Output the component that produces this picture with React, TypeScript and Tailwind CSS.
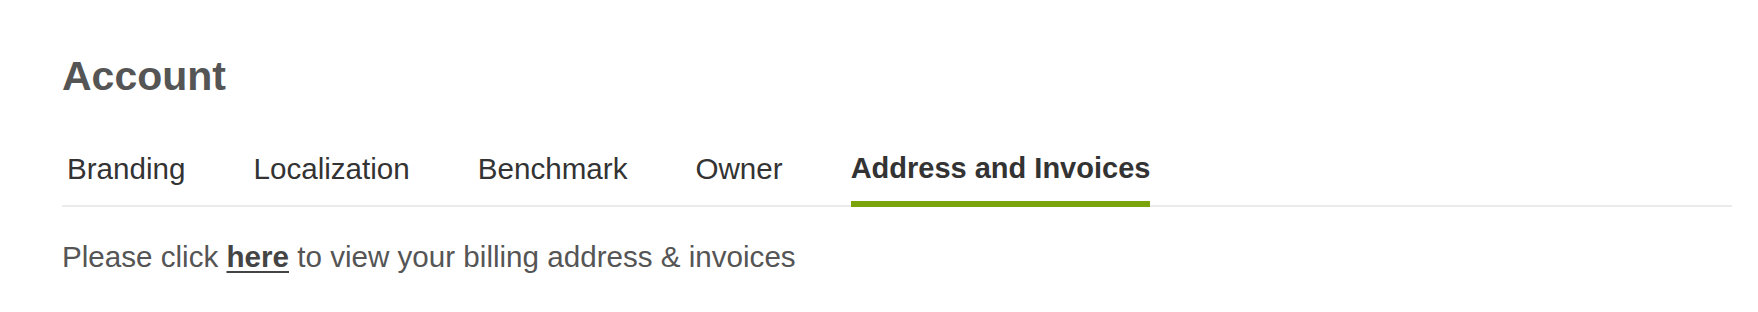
import { useState } from "react";

const tabs = ["Branding", "Localization", "Benchmark", "Owner", "Address and Invoices"];

export default function App() {
  const [active, setActive] = useState("Address and Invoices");

  return (
    <div className="min-h-[312px] bg-white pl-[62px] pr-[26px] pt-[52px] font-['Liberation_Sans',Arial,sans-serif]">
      <h1 className="text-[41px] leading-[48px] font-bold text-[#555555]">Account</h1>

      {/* tabs */}
      <div className="mt-[51px] flex items-end gap-[68px] border-b-2 border-[#ebebeb] pl-[5px]">
        {tabs.map((tab) =>
          tab === active ? (
            <button key={tab} className="flex flex-col -mb-[2px]" onClick={() => setActive(tab)}>
              <span className="text-[29px] leading-[34px] font-bold text-[#333333] mb-[16px]">{tab}</span>
              <span className="h-[6px] w-full bg-[#7ba30b]"></span>
            </button>
          ) : (
            <button
              key={tab}
              className="text-[29.6px] leading-[34px] text-[#333333] pb-[19px]"
              onClick={() => setActive(tab)}
            >
              {tab}
            </button>
          )
        )}
      </div>

      <p className="mt-[33px] text-[29.6px] leading-[34px] text-[#555555]">
        Please click{" "}
        <a href="#" className="font-bold text-[#444444] underline underline-offset-[4px] decoration-2">
          here
        </a>{" "}
        to view your billing address &amp; invoices
      </p>
    </div>
  );
}
